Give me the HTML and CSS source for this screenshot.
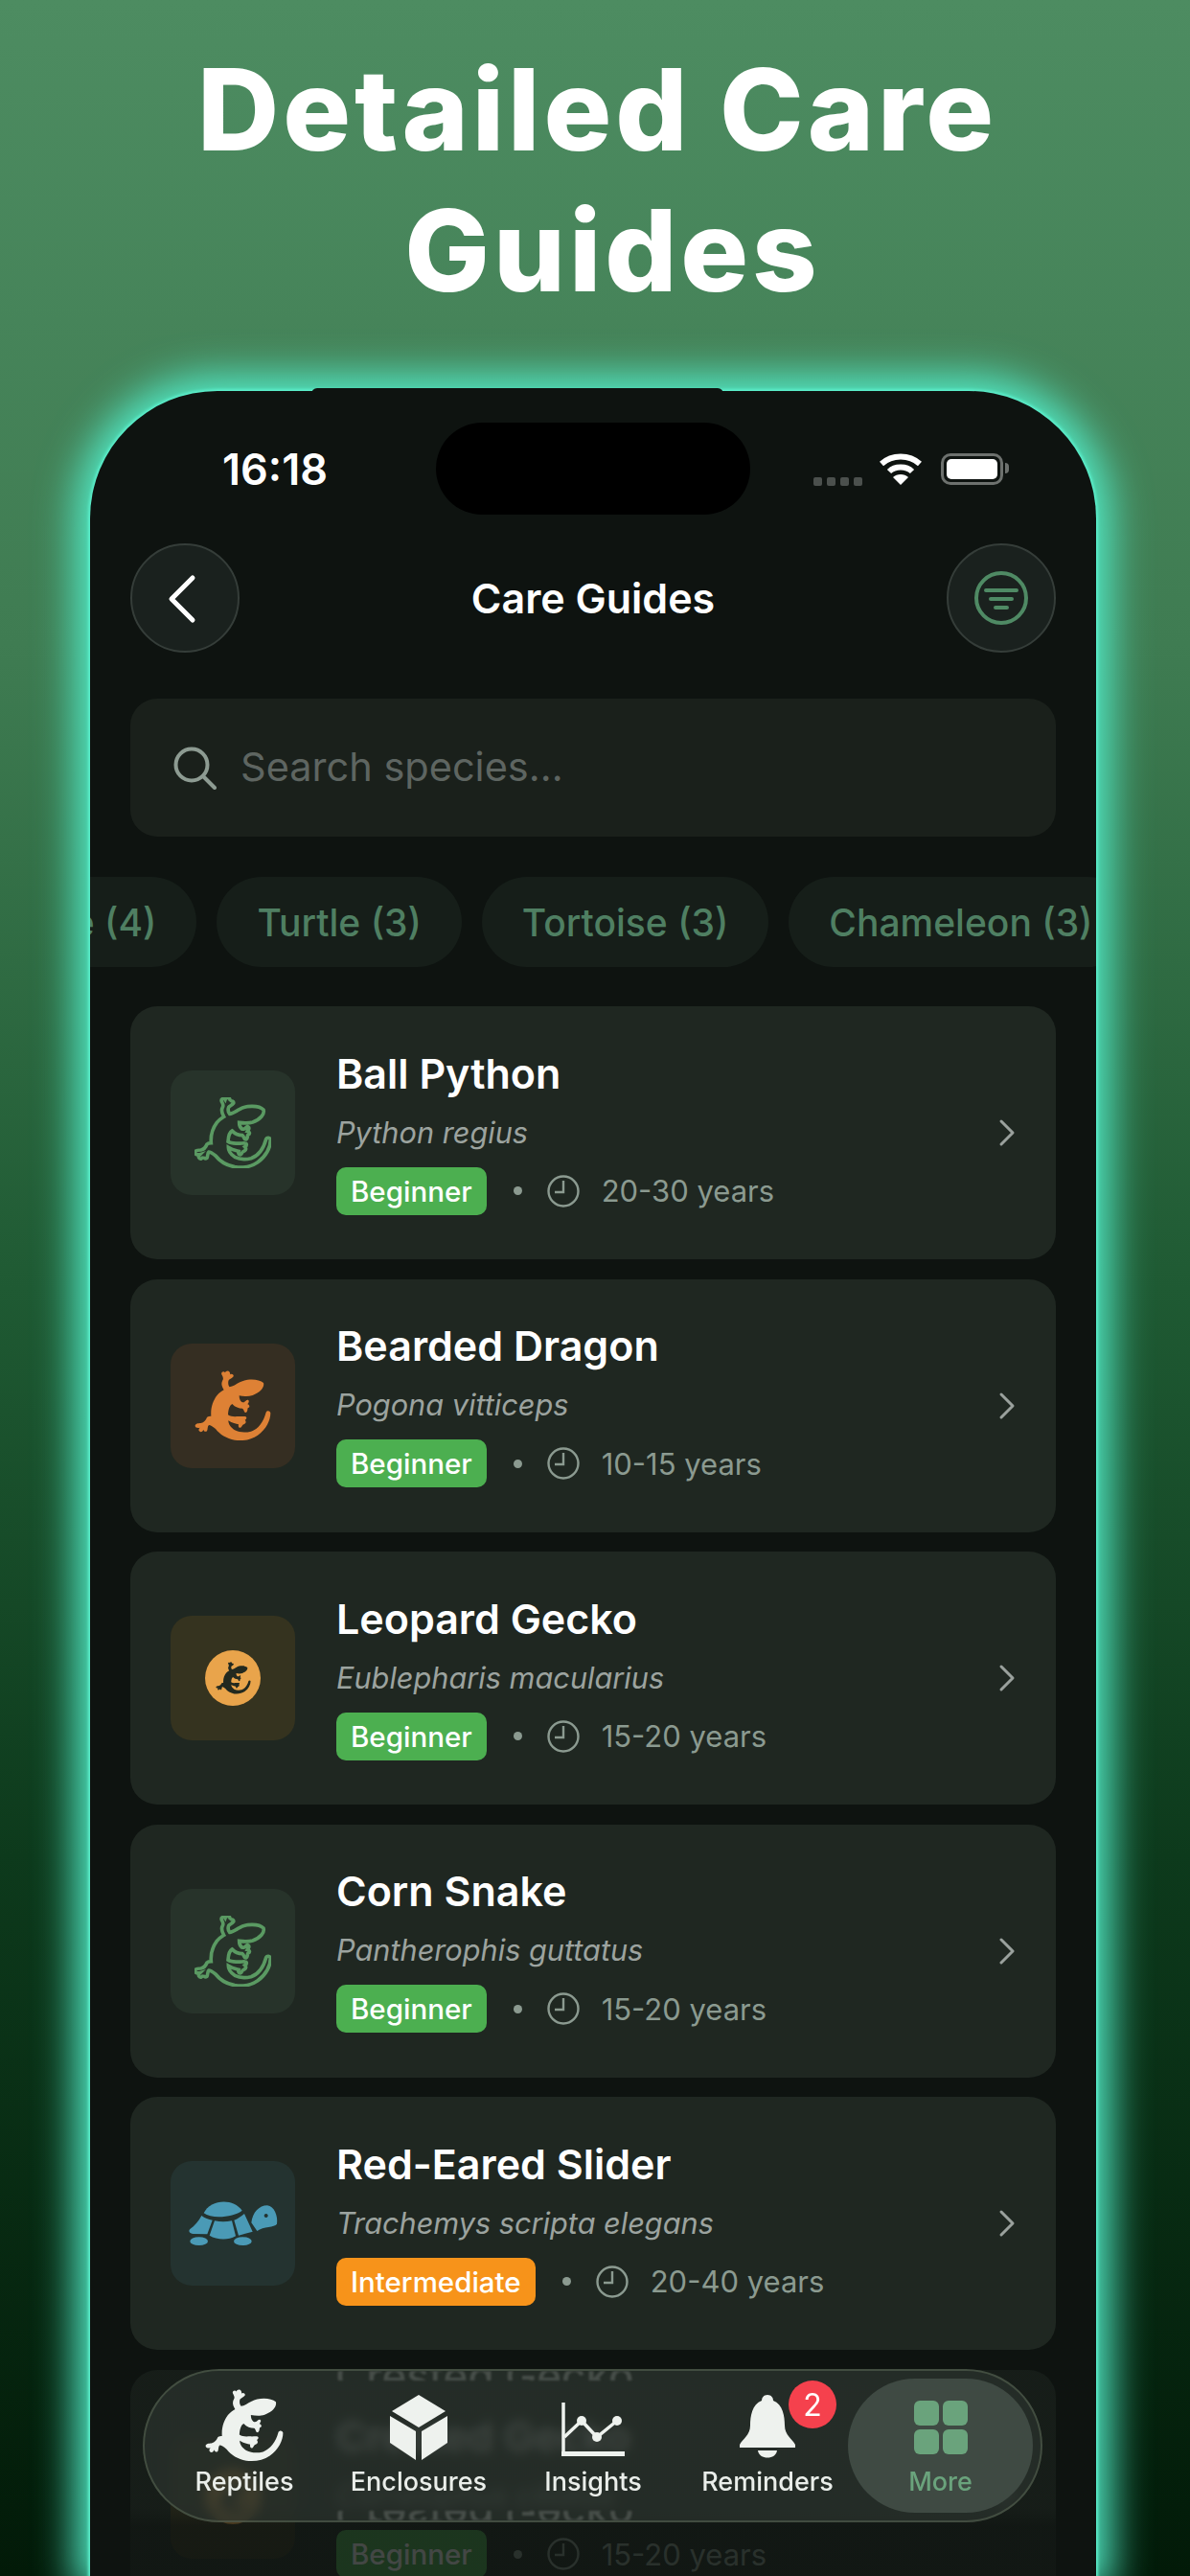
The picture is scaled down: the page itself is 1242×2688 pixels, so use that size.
FILE: index.html
```html
<!DOCTYPE html>
<html lang="en">
<head>
  <meta charset="UTF-8" />
  <title>Care Guides</title>
  <link rel="stylesheet" href="styles.css">
</head>
<body>

<svg class="icon-defs" aria-hidden="true">
  <symbol id="gecko" viewBox="158 153 240 222">
    <path d="M300 190C320 178 360 178 374 192C378 205 365 222 340 231C325 236 312 234 298 232C298 240 300 248 306 252C312 254 316 252 320 247C325 243 331 247 327 254L324 259C330 260 333 268 326 270C323 270 326 282 319 285C312 285 314 276 308 272C297 272 285 268 276 258C268 262 264 275 263 292C272 298 282 298 296 297C304 298 310 296 316 297C323 298 322 305 316 308C320 312 320 318 314 321C308 322 308 326 304 331C298 336 294 328 296 322C288 320 276 318 264 310C264 322 272 332 284 340C300 348 318 348 335 344C358 336 374 314 382 284C385 278 394 278 396 286C396 310 382 338 356 356C336 370 308 375 284 371C258 366 238 354 224 336C214 328 208 324 203 324C198 328 200 338 197 343C190 348 186 340 186 338C184 346 176 348 172 342C170 338 173 334 175 332C168 334 160 332 160 326C160 320 170 318 178 318C188 316 194 308 197 300C201 296 206 296 210 296C208 270 216 248 228 232C236 222 244 218 250 214C244 204 240 196 246 184C250 178 246 172 243 166C240 158 250 154 254 160C256 154 264 152 268 158C270 162 270 164 269 166C274 162 282 166 280 172C276 178 268 180 265 184C262 192 264 200 268 205C278 204 288 196 300 190Z"/>
  </symbol>
  <symbol id="turtle" viewBox="135 172 285 148">
    <path d="M185 214C204 172 276 164 305 206C280 226 212 234 185 214Z"/>
    <path d="M219 238C238 242 254 242 273 238L285 286C260 300 226 298 203 284Z"/>
    <path d="M178 222C188 230 200 234 212 236L196 280L152 279C140 278 136 270 142 264C156 254 170 238 178 222Z"/>
    <path d="M312 216L338 272L294 284L280 236C292 232 302 224 312 216Z"/>
    <path fill-rule="evenodd" d="M334 244C338 212 358 190 384 190C406 192 418 224 414 248C406 260 372 254 352 270ZM380 216a6 6 0 1 0 .1 0Z"/>
    <ellipse cx="170" cy="302" rx="28" ry="13"/>
    <ellipse cx="307" cy="302" rx="28" ry="13"/>
  </symbol>
  <symbol id="clock" viewBox="0 0 34 34">
    <circle cx="17" cy="17" r="15.5" fill="none" stroke="currentColor" stroke-width="2.4"/>
    <path d="M17 6V18H8" fill="none" stroke="currentColor" stroke-width="2.4"/>
  </symbol>
  <symbol id="chevron" viewBox="0 0 18 30">
    <path d="M3 3L15 15L3 27" fill="none" stroke="currentColor" stroke-width="3" stroke-linecap="round" stroke-linejoin="round"/>
  </symbol>
</svg>

<h1 class="headline">Detailed Care<br><span class="headline-second">Guides</span></h1>

<div class="phone-cap"></div>

<main class="phone">
  <div class="status-bar">
    <span class="time">16:18</span>
    <div class="island"></div>
    <div class="status-icons">
      <div class="signal"><i></i><i></i><i></i><i></i></div>
      <svg class="wifi" viewBox="0 0 44 33" fill="none" stroke="#fff" stroke-width="6">
        <path d="M2 11C13 1 31 1 42 11"/>
        <path d="M10 19C16 13 28 13 34 19"/>
        <path d="M22 33L14 25C18 21 26 21 30 25Z" fill="#fff" stroke="none"/>
      </svg>
      <div class="battery"><div class="battery-fill"></div></div>
    </div>
  </div>

  <nav class="nav">
    <button class="round-btn">
      <svg class="back-icon" width="32" height="52" viewBox="0 0 32 52" fill="none" stroke="#fff" stroke-width="5" stroke-linecap="round" stroke-linejoin="round"><path d="M27 4L5 26L27 48"/></svg>
    </button>
    <span class="nav-title">Care Guides</span>
    <button class="round-btn">
      <svg width="58" height="58" viewBox="0 0 58 58" fill="none" stroke="#4f8a64" stroke-linecap="round"><circle cx="29" cy="29" r="26" stroke-width="4"/><path d="M13 21H45M18 30H40M23 39H35" stroke-width="4"/></svg>
    </button>
  </nav>

  <div class="search">
    <svg width="46" height="46" viewBox="0 0 46 46" fill="none" stroke="#8d9b92" stroke-width="4" stroke-linecap="round"><circle cx="20" cy="20" r="16.5"/><path d="M32 32L44 44"/></svg>
    <span>Search species...</span>
  </div>

  <div class="chips">
    <span class="chip chip-first">Snake (4)</span>
    <span class="chip">Turtle (3)</span>
    <span class="chip">Tortoise (3)</span>
    <span class="chip">Chameleon (3)</span>
  </div>

  <div class="list">
    <div class="card">
      <div class="thumb thumb-green"><svg class="gecko gecko-outline"><use href="#gecko"/></svg></div>
      <div class="info">
        <div class="name">Ball Python</div>
        <div class="latin">Python regius</div>
        <div class="meta"><span class="badge">Beginner</span><i class="dot"></i><svg class="clock"><use href="#clock"/></svg><span class="years">20-30 years</span></div>
      </div>
      <svg class="chevron"><use href="#chevron"/></svg>
    </div>
    <div class="card">
      <div class="thumb thumb-orange"><svg class="gecko"><use href="#gecko"/></svg></div>
      <div class="info">
        <div class="name">Bearded Dragon</div>
        <div class="latin">Pogona vitticeps</div>
        <div class="meta"><span class="badge">Beginner</span><i class="dot"></i><svg class="clock"><use href="#clock"/></svg><span class="years">10-15 years</span></div>
      </div>
      <svg class="chevron"><use href="#chevron"/></svg>
    </div>
    <div class="card">
      <div class="thumb thumb-yellow"><div class="gecko-disc"><svg><use href="#gecko"/></svg></div></div>
      <div class="info">
        <div class="name">Leopard Gecko</div>
        <div class="latin">Eublepharis macularius</div>
        <div class="meta"><span class="badge">Beginner</span><i class="dot"></i><svg class="clock"><use href="#clock"/></svg><span class="years">15-20 years</span></div>
      </div>
      <svg class="chevron"><use href="#chevron"/></svg>
    </div>
    <div class="card">
      <div class="thumb thumb-green"><svg class="gecko gecko-outline"><use href="#gecko"/></svg></div>
      <div class="info">
        <div class="name">Corn Snake</div>
        <div class="latin">Pantherophis guttatus</div>
        <div class="meta"><span class="badge">Beginner</span><i class="dot"></i><svg class="clock"><use href="#clock"/></svg><span class="years">15-20 years</span></div>
      </div>
      <svg class="chevron"><use href="#chevron"/></svg>
    </div>
    <div class="card">
      <div class="thumb thumb-teal"><svg class="turtle"><use href="#turtle"/></svg></div>
      <div class="info">
        <div class="name">Red-Eared Slider</div>
        <div class="latin">Trachemys scripta elegans</div>
        <div class="meta"><span class="badge badge-mid">Intermediate</span><i class="dot"></i><svg class="clock"><use href="#clock"/></svg><span class="years">20-40 years</span></div>
      </div>
      <svg class="chevron"><use href="#chevron"/></svg>
    </div>
    <div class="card">
      <div class="thumb thumb-yellow"><div class="gecko-disc"><svg><use href="#gecko"/></svg></div></div>
      <div class="info">
        <div class="name">Crested Gecko</div>
        <div class="latin">Correlophus ciliatus</div>
        <div class="meta"><span class="badge">Beginner</span><i class="dot"></i><svg class="clock"><use href="#clock"/></svg><span class="years">15-20 years</span></div>
      </div>
      <svg class="chevron"><use href="#chevron"/></svg>
    </div>
  </div>

  <div class="fade"></div>

  <div class="tabbar">
    <span class="mirror mirror-top" aria-hidden="true">Crested Gecko</span>
    <span class="mirror mirror-bottom" aria-hidden="true">Crested Gecko</span>
    <div class="tab">
      <svg class="tab-gecko"><use href="#gecko"/></svg>
      <span>Reptiles</span>
    </div>
    <div class="tab">
      <svg class="tab-icon tab-cube" width="62" height="68" viewBox="0 0 60 68"><path d="M30 0L58 17L30 34L2 17Z"/><path d="M0 22L27 38V68L0 50Z"/><path d="M60 22L33 38V68L60 50Z"/></svg>
      <span>Enclosures</span>
    </div>
    <div class="tab">
      <svg class="tab-icon" width="66" height="58" viewBox="0 0 66 58"><path d="M2 0V54" fill="none" stroke="#eef2ee" stroke-width="3.5"/><path d="M0 51H66V56H0Z"/><path d="M3 36L21 19L37 36L58 19" fill="none" stroke="#eef2ee" stroke-width="3.5"/><circle cx="21" cy="19" r="5"/><circle cx="37" cy="36" r="5"/><circle cx="58" cy="19" r="5"/></svg>
      <span>Insights</span>
    </div>
    <div class="tab">
      <div class="bell-wrap">
        <svg class="tab-icon" width="58" height="66" viewBox="0 0 58 66"><path d="M29 0C33 0 35 3 35 6C45 10 47 22 47 32C47 42 55 46 58 52V55H0V52C3 46 11 42 11 32C11 22 13 10 23 6C23 3 25 0 29 0Z"/><path d="M19 58H39C38 68 20 68 19 58Z"/></svg>
        <span class="notif">2</span>
      </div>
      <span>Reminders</span>
    </div>
    <div class="tab tab-active">
      <div class="grid-icon"><i></i><i></i><i></i><i></i></div>
      <span>More</span>
    </div>
  </div>
</main>

</body>
</html>
```

FILE: styles.css
```css
html, body {
  margin: 0;
  padding: 0;
  height: 2688px;
  overflow: hidden;
}

body {
  position: relative;
  font-family: 'Inter', 'Liberation Sans', sans-serif;
  color: white;
  background: linear-gradient(180deg, #4d8c61 0%, #3f7c52 25%, #1f5a33 50%, #0d3a1c 72%, #021a08 100%);
}

.icon-defs {
  display: none;
}

.headline {
  margin: 0;
  height: 408px;
  box-sizing: border-box;
  padding: 41px 0 0 5px;
  font-size: 118px;
  line-height: 147px;
  font-weight: 800;
  letter-spacing: 3.9px;
  text-align: center;
}

.headline-second {
  margin-left: 32px;
}

.phone-cap {
  position: absolute;
  left: 325px;
  top: 405px;
  width: 430px;
  height: 10px;
  background: #0e1310;
  border-radius: 6px 6px 0 0;
  z-index: 1;
}

.phone {
  position: relative;
  margin-left: 94px;
  width: 1050px;
  height: 2280px;
  box-sizing: border-box;
  padding: 33px 42px 0;
  background-color: #0e1310;
  border-radius: 133px 133px 0 0;
  box-shadow: 0 0 3px 2px #5cf0cc, 0 0 40px 16px #52eac6;
  overflow: hidden;
}

.status-bar {
  position: relative;
  height: 96px;
  display: flex;
  align-items: center;
  justify-content: space-between;
  padding: 0 55px 0 96px;
}

.time {
  font-size: 45px;
  font-weight: 600;
}

.island {
  position: absolute;
  left: 319px;
  top: 0;
  width: 328px;
  height: 96px;
  background: #000;
  border-radius: 48px;
}

.status-icons {
  display: flex;
  align-items: center;
}

.signal {
  display: flex;
  gap: 5px;
  margin-top: 26px;
  margin-right: 18px;
}

.signal i {
  width: 9px;
  height: 9px;
  border-radius: 2px;
  background: #4b504d;
}

.wifi {
  width: 44px;
  height: 33px;
  margin-right: 20px;
}

.battery {
  position: relative;
  width: 65px;
  height: 33px;
  box-sizing: border-box;
  padding: 3px;
  border: 3px solid #6d716e;
  border-radius: 10px;
}

.battery:after {
  content: "";
  position: absolute;
  right: -9px;
  top: 7px;
  width: 4px;
  height: 11px;
  background: #6d716e;
  border-radius: 0 4px 4px 0;
}

.battery-fill {
  height: 100%;
  background: white;
  border-radius: 5px;
}

.nav {
  display: flex;
  align-items: center;
  justify-content: space-between;
  margin-top: 30px;
}

.round-btn {
  width: 114px;
  height: 114px;
  display: flex;
  align-items: center;
  justify-content: center;
  padding: 0;
  background: #1a211e;
  border: 2px solid #353d39;
  border-radius: 50%;
}

.back-icon {
  margin: 2px 6px 0 0;
}

.nav-title {
  font-size: 43px;
  font-weight: 600;
}

.search {
  height: 144px;
  margin-top: 48px;
  display: flex;
  align-items: center;
  gap: 25px;
  padding-left: 44px;
  background: #1a201b;
  border-radius: 28px;
  font-size: 41.5px;
  color: #5e6561;
}

.search span {
  margin-top: -2px;
}

.chips {
  display: flex;
  gap: 21px;
  height: 94px;
  margin: 42px -42px 0;
  overflow: hidden;
}

.chip {
  flex-shrink: 0;
  display: flex;
  align-items: center;
  padding: 0 42px;
  background: #161e19;
  border-radius: 47px;
  font-size: 39px;
  font-weight: 500;
  color: #4f7f62;
}

.chip-first {
  margin-left: -152px;
}

.list {
  display: flex;
  flex-direction: column;
  gap: 20.5px;
  margin-top: 41px;
}

.card {
  flex-shrink: 0;
  height: 264px;
  display: flex;
  align-items: center;
  padding: 0 42px;
  background: #1f2721;
  border-radius: 28px;
}

.thumb {
  flex-shrink: 0;
  width: 130px;
  height: 130px;
  display: flex;
  align-items: center;
  justify-content: center;
  border-radius: 22px;
}

.thumb-green { background: #27332a; }
.thumb-orange { background: #352e22; }
.thumb-yellow { background: #35331f; }
.thumb-teal { background: #243330; }

.gecko {
  width: 80px;
  height: 74px;
  fill: #de8135;
}

.gecko-outline {
  fill: #27332a;
  stroke: #5a9a62;
  stroke-width: 11px;
}

.turtle {
  width: 95px;
  height: 50px;
  fill: #4a9ab6;
}

.gecko-disc {
  width: 58px;
  height: 58px;
  display: flex;
  align-items: center;
  justify-content: center;
  background: #e9a44b;
  border-radius: 50%;
}

.gecko-disc svg {
  width: 37px;
  height: 34px;
  fill: #23291f;
}

.info {
  flex: 1;
  margin-left: 43px;
}

.name {
  margin-top: -3px;
  font-size: 43px;
  line-height: 52px;
  font-weight: 600;
}

.latin {
  margin-top: 16px;
  font-size: 30.7px;
  line-height: 40px;
  font-style: italic;
  color: #9ca39f;
}

.meta {
  display: flex;
  align-items: center;
  height: 50px;
  margin-top: 16px;
}

.badge {
  height: 50px;
  display: flex;
  align-items: center;
  padding: 0 15px;
  background: #4caf50;
  border-radius: 10px;
  font-size: 29.5px;
  font-weight: 500;
}

.badge-mid {
  background: #f7931a;
}

.dot {
  width: 9px;
  height: 9px;
  margin: 0 26px 0 28px;
  background: #8b9a90;
  border-radius: 50%;
}

.clock {
  width: 34px;
  height: 34px;
  color: #8b9a90;
}

.years {
  margin-left: 23px;
  font-size: 31px;
  color: #8b9a90;
}

.chevron {
  flex-shrink: 0;
  width: 18px;
  height: 30px;
  color: #9aa19d;
}

.fade {
  position: absolute;
  left: 0;
  right: 0;
  bottom: 0;
  height: 236px;
  background: linear-gradient(180deg, rgba(14, 19, 16, 0) 0%, rgba(14, 19, 16, 0.5) 8%, rgba(14, 19, 16, 0.5) 70%, rgba(14, 19, 16, 0.78) 78%);
}

.tabbar {
  position: absolute;
  left: 55px;
  top: 2064px;
  width: 939px;
  height: 160px;
  box-sizing: border-box;
  display: flex;
  align-items: center;
  padding-left: 13px;
  background: rgba(42, 50, 44, 0.74);
  border: 2px solid rgba(108, 124, 100, 0.42);
  border-radius: 80px;
  backdrop-filter: blur(6px);
  overflow: hidden;
}

.mirror {
  position: absolute;
  left: 199px;
  height: 10px;
  overflow: hidden;
  font-size: 44px;
  line-height: 10px;
  font-weight: 500;
  color: #474e49;
  filter: blur(1px);
}

.mirror-top {
  top: 0;
}

.mirror-bottom {
  bottom: 0;
  transform: scaleY(-1);
}

.tab {
  position: relative;
  flex-shrink: 0;
  width: 182px;
  height: 140px;
  display: flex;
  flex-direction: column;
  align-items: center;
  justify-content: flex-end;
  padding-bottom: 16px;
  box-sizing: border-box;
  font-size: 27px;
  font-weight: 500;
  color: #eaeeea;
}

.tab-gecko {
  width: 84px;
  height: 76px;
  margin-bottom: 4px;
  fill: #eef2ee;
}

.tab-icon {
  display: block;
  margin-bottom: 8px;
  fill: #eef2ee;
}

.tab-cube {
  margin-bottom: 6px;
}

.bell-wrap {
  position: relative;
}

.notif {
  position: absolute;
  left: 51px;
  top: -15px;
  width: 50px;
  height: 50px;
  display: flex;
  align-items: center;
  justify-content: center;
  background: #f5414d;
  border-radius: 50%;
  font-size: 32px;
  font-weight: 400;
  color: white;
}

.tab-active {
  width: 193px;
  margin-left: -7px;
  background: #3f4a43;
  border-radius: 70px;
  color: #6aa37c;
}

.grid-icon {
  display: grid;
  grid-template-columns: 26px 26px;
  grid-template-rows: 26px 26px;
  gap: 4px;
  margin-bottom: 12px;
}

.grid-icon i {
  background: #6aa37c;
  border-radius: 6px;
}
```
